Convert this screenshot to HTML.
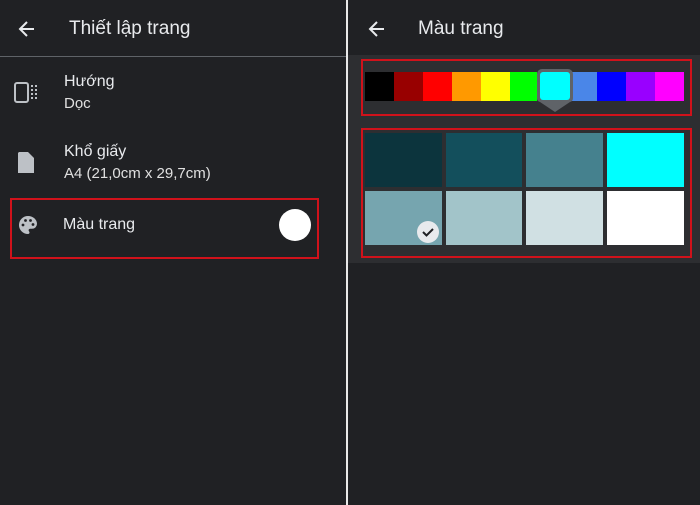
<!DOCTYPE html>
<html><head><meta charset="utf-8"><style>
*{margin:0;padding:0;box-sizing:border-box}
body{width:700px;height:505px;background:#202124;position:relative;overflow:hidden;font-family:"Liberation Sans",sans-serif;color:#e8eaed}
.a{position:absolute}
.t{position:absolute;white-space:nowrap}
</style></head><body>
<!-- left -->
<svg class="a" style="left:17px;top:19px" width="20" height="20" viewBox="0 0 20 20"><path d="M17 10H4M10 3L3 10l7 7" stroke="#e8eaed" stroke-width="2" fill="none"/></svg>
<div class="t" style="left:69px;top:18px;font-size:19px">Thiết lập trang</div>
<div class="a" style="left:0;top:56px;width:346px;height:1px;background:#5f6368"></div>
<svg class="a" style="left:14px;top:82px" width="24" height="22"><rect x="1" y="1" width="13" height="19" rx="2" stroke="#bdc1c6" stroke-width="2" fill="none"/><path d="M18 3v16M22 3v16" stroke="#bdc1c6" stroke-width="2" stroke-dasharray="2 2"/></svg>
<div class="t" style="left:64px;top:73px;font-size:16px">Hướng</div>
<div class="t" style="left:64px;top:95px;font-size:15px;color:#e0e0e0">Dọc</div>
<svg class="a" style="left:17px;top:152px" width="18" height="22"><path d="M2 0h9l6 6v15H1V1z" fill="#bdc1c6"/></svg>
<div class="t" style="left:64px;top:143px;font-size:16px">Khổ giấy</div>
<div class="t" style="left:64px;top:165px;font-size:15px;color:#e0e0e0">A4 (21,0cm x 29,7cm)</div>
<div class="a" style="left:10px;top:198px;width:309px;height:61px;border:2px solid #d0121b"></div>
<svg class="a" style="left:18px;top:215px" width="20" height="20" viewBox="0 0 20 20"><path d="M10 1a9 9 0 0 0 0 18c1 0 1.5-.7 1.5-1.5 0-.5-.3-.8-.5-1.2-.3-.3-.4-.7-.4-1 0-.8.7-1.5 1.5-1.5H14a5 5 0 0 0 5-5C19 4.5 15 1 10 1z" fill="#bdc1c6"/><circle cx="5" cy="10" r="1.4" fill="#202124"/><circle cx="7.5" cy="5.5" r="1.4" fill="#202124"/><circle cx="12.5" cy="5.5" r="1.4" fill="#202124"/><circle cx="15" cy="9.5" r="1.4" fill="#202124"/></svg>
<div class="t" style="left:63px;top:216px;font-size:16px">Màu trang</div>
<div class="a" style="left:279px;top:209px;width:32px;height:32px;border-radius:50%;background:#fff"></div>
<div class="a" style="left:346px;top:0;width:2px;height:505px;background:#e8e8e8"></div>
<!-- right -->
<svg class="a" style="left:367px;top:19px" width="20" height="20" viewBox="0 0 20 20"><path d="M17 10H4M10 3L3 10l7 7" stroke="#e8eaed" stroke-width="2" fill="none"/></svg>
<div class="t" style="left:418px;top:18px;font-size:19px">Màu trang</div>
<div class="a" style="left:348px;top:55px;width:352px;height:208px;background:#2d2e31"></div>
<div class="a" style="left:361px;top:59px;width:331px;height:57px;border:2px solid #d0121b"></div>
<div class="a" style="left:365px;top:72px;width:319px;height:29px;display:flex">
<div style="width:29px;background:#000"></div><div style="width:29px;background:#980000"></div><div style="width:29px;background:#f00"></div><div style="width:29px;background:#f90"></div><div style="width:29px;background:#ff0"></div><div style="width:27px;background:#0f0"></div><div style="width:35px"></div><div style="width:25px;background:#4a86e8"></div><div style="width:29px;background:#00f"></div><div style="width:29px;background:#90f"></div><div style="width:29px;background:#f0f"></div></div>
<svg class="a" style="left:536px;top:68px" width="38" height="46"><path d="M6 1h26a5 5 0 0 1 5 5v24a4 4 0 0 1-3 4l-15 10-15-10a4 4 0 0 1-3-4V6a5 5 0 0 1 5-5z" fill="#5f6368"/><rect x="4" y="4" width="30" height="28" rx="3" fill="#0ff"/></svg>
<div class="a" style="left:361px;top:128px;width:331px;height:130px;border:2px solid #d0121b"></div>
<div class="a" style="left:365px;top:133px;width:77px;height:54px;background:#0c343d"></div>
<div class="a" style="left:446px;top:133px;width:76px;height:54px;background:#134f5c"></div>
<div class="a" style="left:526px;top:133px;width:77px;height:54px;background:#45818e"></div>
<div class="a" style="left:607px;top:133px;width:77px;height:54px;background:#0ff"></div>
<div class="a" style="left:365px;top:191px;width:77px;height:54px;background:#76a5af"></div>
<div class="a" style="left:446px;top:191px;width:76px;height:54px;background:#a2c4c9"></div>
<div class="a" style="left:526px;top:191px;width:77px;height:54px;background:#d0e0e3"></div>
<div class="a" style="left:607px;top:191px;width:77px;height:54px;background:#fff"></div>
<svg class="a" style="left:417px;top:221px" width="22" height="22"><circle cx="11" cy="11" r="11" fill="#e8eaed"/><path d="M6 11l3.5 3.5L16 8" stroke="#202124" stroke-width="2" fill="none"/></svg>
</body></html>
